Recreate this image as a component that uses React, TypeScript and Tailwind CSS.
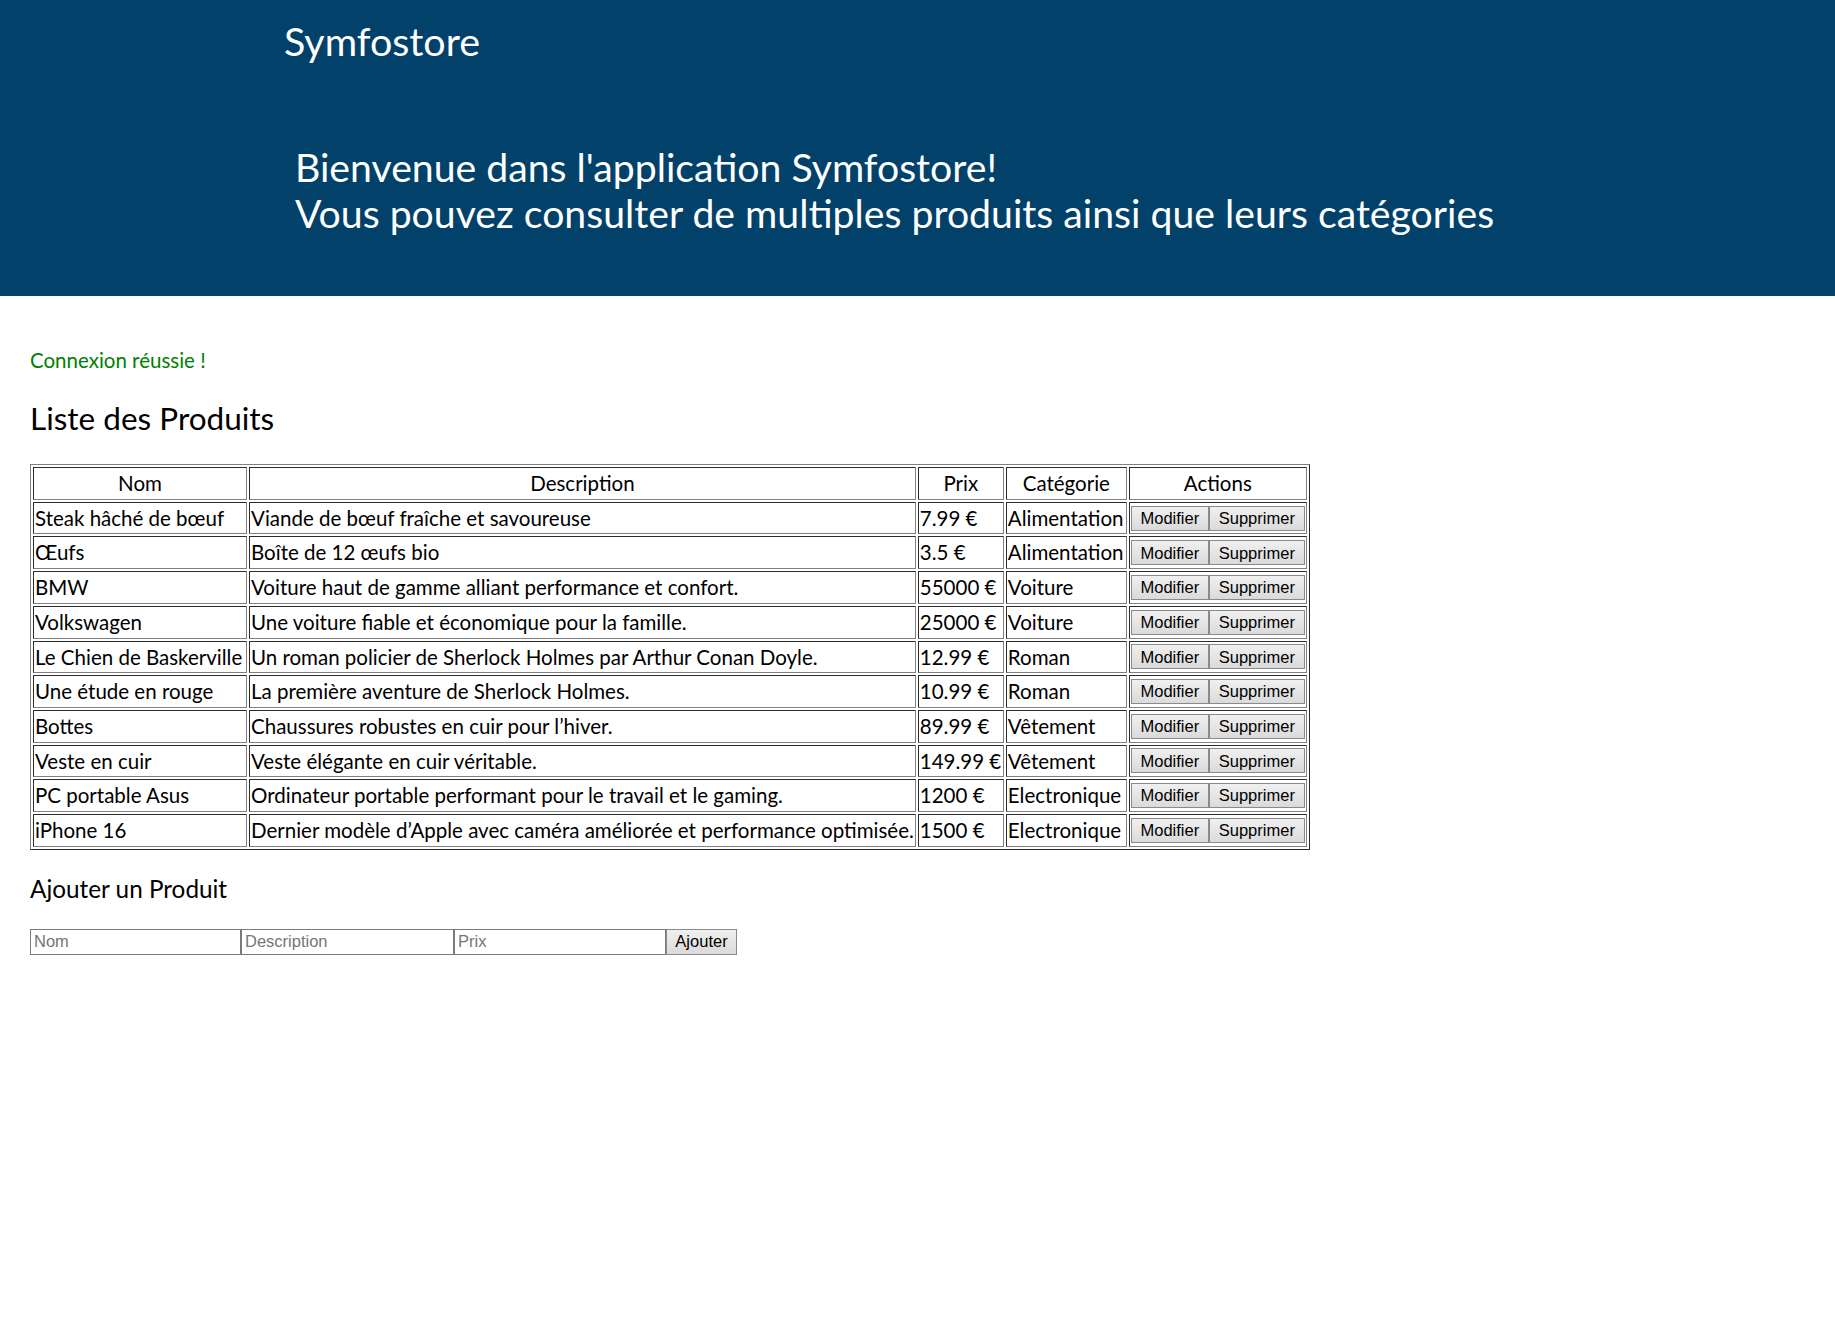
const produits = [
  ["Steak hâché de bœuf", "Viande de bœuf fraîche et savoureuse", "7.99 €", "Alimentation"],
  ["Œufs", "Boîte de 12 œufs bio", "3.5 €", "Alimentation"],
  ["BMW", "Voiture haut de gamme alliant performance et confort.", "55000 €", "Voiture"],
  ["Volkswagen", "Une voiture fiable et économique pour la famille.", "25000 €", "Voiture"],
  ["Le Chien de Baskerville", "Un roman policier de Sherlock Holmes par Arthur Conan Doyle.", "12.99 €", "Roman"],
  ["Une étude en rouge", "La première aventure de Sherlock Holmes.", "10.99 €", "Roman"],
  ["Bottes", "Chaussures robustes en cuir pour l’hiver.", "89.99 €", "Vêtement"],
  ["Veste en cuir", "Veste élégante en cuir véritable.", "149.99 €", "Vêtement"],
  ["PC portable Asus", "Ordinateur portable performant pour le travail et le gaming.", "1200 €", "Electronique"],
  ["iPhone 16", "Dernier modèle d’Apple avec caméra améliorée et performance optimisée.", "1500 €", "Electronique"],
];

const cell = "border border-[#808080] [border-style:inset] p-px whitespace-nowrap leading-[28.7px]";
const btn =
  "h-[25px] border border-[#8a8a8a] bg-gradient-to-b from-[#f0f0f0] to-[#dadada] font-['Liberation_Sans',Arial,sans-serif] text-[16.5px] text-black leading-none";
const input =
  "h-[26px] border border-[#7a7a7a] px-[3px] font-['Liberation_Sans',Arial,sans-serif] text-[16.5px] placeholder:text-[#757575] outline-none";

export default function App() {
  return (
    <div className="min-h-screen bg-white font-[Lato,sans-serif] text-black">
      <header className="h-[296px] bg-[#02426a] text-white">
        <h1 className="pl-[284px] pt-[17px] text-[39.4px] leading-[48px]">Symfostore</h1>
        <div className="mt-[79px] pl-[295px] text-[39.2px] leading-[46px]">
          <p>Bienvenue dans l'application Symfostore!</p>
          <p>Vous pouvez consulter de multiples produits ainsi que leurs catégories</p>
        </div>
      </header>

      <main className="px-[30px]">
        <p className="mt-[50px] text-[20.5px] leading-[28px] text-[#008000]">Connexion réussie !</p>
        <h2 className="mt-[26px] text-[31.5px] leading-[36px]">Liste des Produits</h2>

        <table className="mt-[28px] border border-[#808080] [border-style:outset] border-separate border-spacing-[2px] text-[20.5px]">
          <thead>
            <tr>
              <th className={`${cell} w-[214px] text-center font-normal`}>Nom</th>
              <th className={`${cell} w-[666px] text-center font-normal`}>Description</th>
              <th className={`${cell} w-[86px] text-center font-normal`}>Prix</th>
              <th className={`${cell} w-[121px] text-center font-normal`}>Catégorie</th>
              <th className={`${cell} w-[178px] text-center font-normal`}>Actions</th>
            </tr>
          </thead>
          <tbody>
            {produits.map(([nom, desc, prix, cat]) => (
              <tr key={nom}>
                <td className={cell}>{nom}</td>
                <td className={cell}>{desc}</td>
                <td className={cell}>{prix}</td>
                <td className={cell}>{cat}</td>
                <td className={cell}>
                  <div className="flex">
                    <button className={`${btn} w-[78px]`}>Modifier</button>
                    <button className={`${btn} flex-1`}>Supprimer</button>
                  </div>
                </td>
              </tr>
            ))}
          </tbody>
        </table>

        <h3 className="mt-[24px] text-[24.3px] leading-[30px]">Ajouter un Produit</h3>
        <form className="mt-[25px] flex">
          <input className={`${input} w-[211px]`} placeholder="Nom" />
          <input className={`${input} w-[213px]`} placeholder="Description" />
          <input className={`${input} w-[212px]`} placeholder="Prix" />
          <button type="button" className={`${btn} h-[26px] w-[71px]`}>
            Ajouter
          </button>
        </form>
      </main>
    </div>
  );
}
